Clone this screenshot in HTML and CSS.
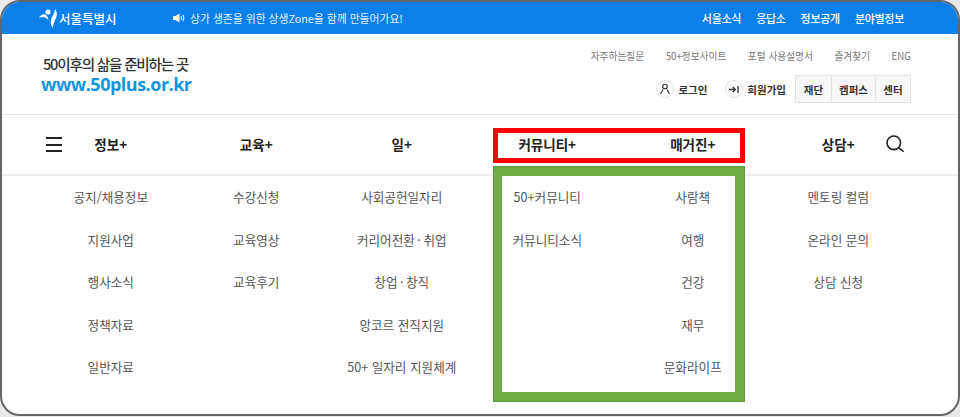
FILE: index.html
```html
<!DOCTYPE html>
<html lang="ko">
<head>
    <meta charset="UTF-8">
    <meta name="viewport" content="width=device-width, initial-scale=1.0">
    <title>서울시50플러스포털</title>
    <link rel="stylesheet" href="styles.css">
</head>
<body>
    <div class="frame">
        <div class="top-bar">
            <div class="seoul-logo">
                <svg class="seoul-mark" width="20" height="22" viewBox="0 0 20 22">
                    <circle cx="10" cy="5" r="2.6" fill="#fff"/>
                    <path d="M1 11 C3 7 6 6.5 8 8 C9.5 9 10 11 10.5 13.5 C8.5 10.5 5 9 1 11 Z" fill="#fff"/>
                    <path d="M17 2 C19.5 5 19.5 9 17 13 C16 15 15 18 15 21 C12.5 18 12 14 14 10 C15.5 7 17 5 17 2 Z" fill="#fff"/>
                </svg>
                <span>서울특별시</span>
            </div>
            <div class="notice">
                <svg width="12" height="10" viewBox="0 0 12 10">
                    <path d="M0 3 H2.5 L6.5 0.5 V9.5 L2.5 7 H0 Z" fill="#fff"/>
                    <path d="M8 3 Q9.2 5 8 7 M10 1.8 Q11.8 5 10 8.2" stroke="#fff" fill="none"/>
                </svg>
                <span>상가 생존을 위한 상생Zone을 함께 만들어가요!</span>
            </div>
            <ul class="top-links">
                <li>서울소식</li>
                <li>응답소</li>
                <li>정보공개</li>
                <li>분야별정보</li>
            </ul>
        </div>

        <div class="header">
            <div class="brand">
                <div class="brand-line">50이후의 삶을 준비하는 곳</div>
                <div class="brand-url">www.50plus.or.kr</div>
            </div>
            <div class="header-right">
                <ul class="util-links">
                    <li>자주하는질문</li>
                    <li>50+정보사이트</li>
                    <li>포털 사용설명서</li>
                    <li>즐겨찾기</li>
                    <li>ENG</li>
                </ul>
                <div class="account-row">
                    <div class="account-item">
                        <span class="round-icon">
                            <svg width="12" height="12" viewBox="0 0 12 12" fill="none" stroke="#333" stroke-width="1.1">
                                <circle cx="6" cy="3.5" r="2.3"/>
                                <path d="M1.5 11 L4 6.5 M10.5 11 L8 6.5"/>
                            </svg>
                        </span>
                        <span>로그인</span>
                    </div>
                    <div class="account-item">
                        <span class="round-icon">
                            <svg width="12" height="12" viewBox="0 0 12 12" fill="none" stroke="#333" stroke-width="1.3">
                                <path d="M1 6.5 H7 M4.8 4 L7.3 6.5 L4.8 9 M10 3 V10"/>
                            </svg>
                        </span>
                        <span>회원가입</span>
                    </div>
                    <div class="tabs">
                        <div class="tab tab-a">재단</div>
                        <div class="tab tab-b">캠퍼스</div>
                        <div class="tab tab-c">센터</div>
                    </div>
                </div>
            </div>
        </div>

        <div class="nav">
            <div class="burger"><i></i><i></i><i></i></div>
            <div class="nav-grid">
                <div>정보+</div>
                <div>교육+</div>
                <div>일+</div>
                <div>커뮤니티+</div>
                <div>매거진+</div>
                <div>상담+</div>
            </div>
            <svg class="search-icon" width="20" height="20" viewBox="0 0 20 20" fill="none" stroke="#222">
                <circle cx="8.8" cy="8.8" r="6.8" stroke-width="1.6"/>
                <path d="M13.8 13.8 L18.6 17.6" stroke-width="1.6"/>
            </svg>
        </div>

        <div class="menu-grid">
            <ul>
                <li>공지/채용정보</li>
                <li>지원사업</li>
                <li>행사소식</li>
                <li>정책자료</li>
                <li>일반자료</li>
            </ul>
            <ul>
                <li>수강신청</li>
                <li>교육영상</li>
                <li>교육후기</li>
            </ul>
            <ul>
                <li>사회공헌일자리</li>
                <li>커리어전환&thinsp;·&thinsp;취업</li>
                <li>창업&thinsp;·&thinsp;창직</li>
                <li>앙코르 전직지원</li>
                <li>50+ 일자리 지원체계</li>
            </ul>
            <ul>
                <li>50+커뮤니티</li>
                <li>커뮤니티소식</li>
            </ul>
            <ul>
                <li>사람책</li>
                <li>여행</li>
                <li>건강</li>
                <li>재무</li>
                <li>문화라이프</li>
            </ul>
            <ul>
                <li>멘토링 컬럼</li>
                <li>온라인 문의</li>
                <li>상담 신청</li>
            </ul>
        </div>

        <div class="mark-red"></div>
        <div class="mark-green"></div>
    </div>
</body>
</html>
```

FILE: styles.css
```css
* {
    box-sizing: border-box;
}

html, body {
    margin: 0;
    padding: 0;
    height: 417px;
    overflow: hidden;
    background-color: #e9e9e9;
}

body {
    font-family: "Noto Sans CJK KR", "Noto Sans", sans-serif;
}

ul {
    list-style: none;
    margin: 0;
    padding: 0;
}

.frame {
    position: relative;
    width: 960px;
    height: 416px;
    background-color: #fff;
    border: 2px solid #666;
    border-radius: 20px;
    overflow: hidden;
}

/* top blue bar */
.top-bar {
    display: flex;
    align-items: center;
    height: 32px;
    padding: 0 54px 0 36px;
    background-color: #0b80e9;
    color: #fff;
}

.seoul-logo {
    display: flex;
    align-items: center;
    width: 135px;
    font-size: 12.5px;
    font-weight: 500;
}

.seoul-mark {
    margin-right: 1px;
}

.notice {
    display: flex;
    align-items: center;
    gap: 5px;
    font-size: 10.8px;
    color: #e4f1fd;
}

.top-links {
    display: flex;
    gap: 15px;
    margin-left: auto;
    font-size: 11px;
    font-weight: 500;
    letter-spacing: -0.3px;
}

/* logo and account */
.header {
    display: flex;
    justify-content: space-between;
    height: 81px;
    padding: 0 47px 0 39px;
    border-bottom: 1px solid #e3e3e3;
}

.brand {
    padding-top: 20px;
}

.brand-line {
    padding-left: 2px;
    font-size: 14.6px;
    font-weight: 500;
    line-height: 19px;
    letter-spacing: -1.2px;
    color: #333;
}

.brand-url {
    font-family: "Open Sans", sans-serif;
    font-size: 18px;
    font-weight: 700;
    line-height: 22px;
    letter-spacing: -0.5px;
    color: #1296e0;
}

.header-right {
    display: flex;
    flex-direction: column;
    align-items: flex-end;
    padding-top: 12px;
}

.util-links {
    display: flex;
    gap: 21.5px;
    font-size: 9.7px;
    line-height: 20px;
    color: #777;
}

.account-row {
    display: flex;
    align-items: center;
    margin-top: 9px;
    font-size: 10.5px;
    font-weight: 700;
    color: #333;
}

.account-item {
    display: flex;
    align-items: center;
    gap: 4px;
    margin-right: 18px;
}

.account-item + .account-item {
    margin-right: 9px;
}

.round-icon {
    display: flex;
    align-items: center;
    justify-content: center;
    width: 18px;
    height: 18px;
    border: 1px solid #e2e2e2;
    border-radius: 50%;
}

.tabs {
    display: flex;
    height: 28px;
    background-color: #f7f7f7;
    border: 1px solid #e2e2e2;
}

.tab {
    display: flex;
    align-items: center;
    justify-content: center;
}

.tab + .tab {
    border-left: 1px solid #e2e2e2;
}

.tab-a {
    width: 35px;
}

.tab-b {
    width: 44px;
}

.tab-c {
    width: 35px;
}

/* main nav */
.nav {
    position: relative;
    height: 61px;
    border-bottom: 2px solid #eee;
}

.burger {
    position: absolute;
    left: 44px;
    top: 22px;
    display: flex;
    flex-direction: column;
    gap: 4.5px;
    width: 16px;
}

.burger i {
    display: block;
    height: 2px;
    background-color: #222;
}

.nav-grid {
    display: grid;
    grid-template-columns: repeat(6, 145.5px);
    margin-left: 36px;
    font-size: 13.5px;
    font-weight: 700;
    line-height: 59px;
    text-align: center;
    color: #222;
}

.search-icon {
    position: absolute;
    left: 883px;
    top: 19px;
}

/* dropdown columns */
.menu-grid {
    display: grid;
    grid-template-columns: repeat(6, 145.5px);
    margin-left: 36px;
    font-size: 12.6px;
    text-align: center;
    color: #555;
}

.menu-grid li {
    height: 42.5px;
    line-height: 42.5px;
}

/* annotation boxes drawn over the page */
.mark-red {
    position: absolute;
    left: 491px;
    top: 126px;
    width: 252px;
    height: 35px;
    border: 5px solid #f00;
}

.mark-green {
    position: absolute;
    left: 491px;
    top: 164px;
    width: 252px;
    height: 236px;
    border-style: solid;
    border-color: #70ad47;
    border-width: 10px 10px 10px 9px;
    outline: 1px solid #62973e;
    outline-offset: -1px;
}
```
